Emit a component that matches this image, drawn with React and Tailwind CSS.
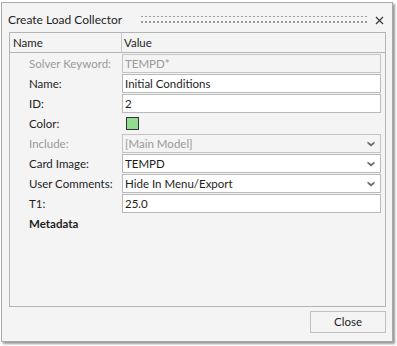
import React from 'react';

const font = { fontFamily: 'Lato, "Liberation Sans", sans-serif' };

const Chevron = () => (
    <svg width="8" height="6" viewBox="0 0 8 6" className="shrink-0">
        <path d="M0.5 0.5 L4 3 L7.5 0.5 L7.5 2.5 L4 5.5 L0.5 2.5 Z" fill="#6b6b6b" />
    </svg>
);

const Row = ({ label, disabled, children }) => (
    <div className="flex h-[20px]">
        <div
            className={`w-[112px] shrink-0 pl-[19px] h-[19px] flex items-center text-[11.5px] ${
                disabled ? 'text-[#9a9a9a]' : 'text-[#1e1e1e]'
            }`}
        >
            {label}
        </div>
        {children}
    </div>
);

const Field = ({ value, disabled, select }) => (
    <div
        className={`w-[259px] h-[19px] border flex items-center pl-[2px] pr-[5px] text-[11.5px] ${
            disabled
                ? 'bg-[#f4f4f4] border-[#c4c4c4] text-[#9a9a9a]'
                : 'bg-white border-[#b9b9b9] text-[#1e1e1e]'
        }`}
    >
        <span className="flex-1 truncate">{value}</span>
        {select && <Chevron />}
    </div>
);

export default function App() {
    return (
        <div className="w-[397px] h-[346px] bg-white pt-[2px] pl-[1px]" style={font}>
            <div className="w-[392px] h-[340px] border border-[#a9a9a9] bg-[#f4f4f4] flex flex-col shadow-[2px_2px_2px_rgba(0,0,0,0.4)]">
                {/* title bar */}
                <div className="h-[29px] pt-[5px] flex items-center pl-[6px]">
                    <span className="w-[133px] shrink-0 text-[12px] text-[#1e1e1e] whitespace-nowrap">Create Load Collector</span>
                    <svg width="226" height="10" className="shrink-0">
                        <defs>
                            <pattern id="grip" width="4" height="6" patternUnits="userSpaceOnUse">
                                <rect x="0" y="0" width="2" height="2" fill="#9a9a9a" />
                            </pattern>
                        </defs>
                        <rect x="0" y="1" width="226" height="8" fill="url(#grip)" />
                    </svg>
                    <svg width="9" height="9" viewBox="0 0 9 9" className="ml-[8px] shrink-0">
                        <path d="M1 1 L8 8 M8 1 L1 8" stroke="#3a3a3a" strokeWidth="1.2" />
                    </svg>
                </div>

                {/* property grid */}
                <div className="ml-[7px] w-[377px] h-[275px] border border-[#b4b4b4] bg-[#f4f4f4] flex flex-col">
                    <div className="h-[20px] border-b border-[#b4b4b4] flex text-[11.5px] text-[#1e1e1e]">
                        <div className="w-[112px] pl-[3px] flex items-center border-r border-[#c8c8c8]">Name</div>
                        <div className="pl-[2px] flex items-center">Value</div>
                    </div>
                    <div className="mt-[1px] flex flex-col">
                        <Row label="Solver Keyword:" disabled>
                            <Field value="TEMPD*" disabled />
                        </Row>
                        <Row label="Name:">
                            <Field value="Initial Conditions" />
                        </Row>
                        <Row label="ID:">
                            <Field value="2" />
                        </Row>
                        <Row label="Color:">
                            <div className="ml-[4px] mt-[3px] w-[13px] h-[13px] border border-[#333] bg-[#92dc92]" />
                        </Row>
                        <Row label="Include:" disabled>
                            <Field value="[Main Model]" disabled select />
                        </Row>
                        <Row label="Card Image:">
                            <Field value="TEMPD" select />
                        </Row>
                        <Row label="User Comments:">
                            <Field value="Hide In Menu/Export" select />
                        </Row>
                        <Row label="T1:">
                            <Field value="25.0" />
                        </Row>
                        <div className="h-[20px] pl-[19px] flex items-center text-[11.5px] font-bold text-[#1e1e1e]">
                            Metadata
                        </div>
                    </div>
                </div>

                <div className="flex justify-end pr-[6px] mt-[4px]">
                    <button className="w-[76px] h-[22px] border border-[#c0c0c0] bg-[#f4f4f4] text-[11.5px] text-[#1e1e1e]">
                        Close
                    </button>
                </div>
            </div>
        </div>
    );
}
